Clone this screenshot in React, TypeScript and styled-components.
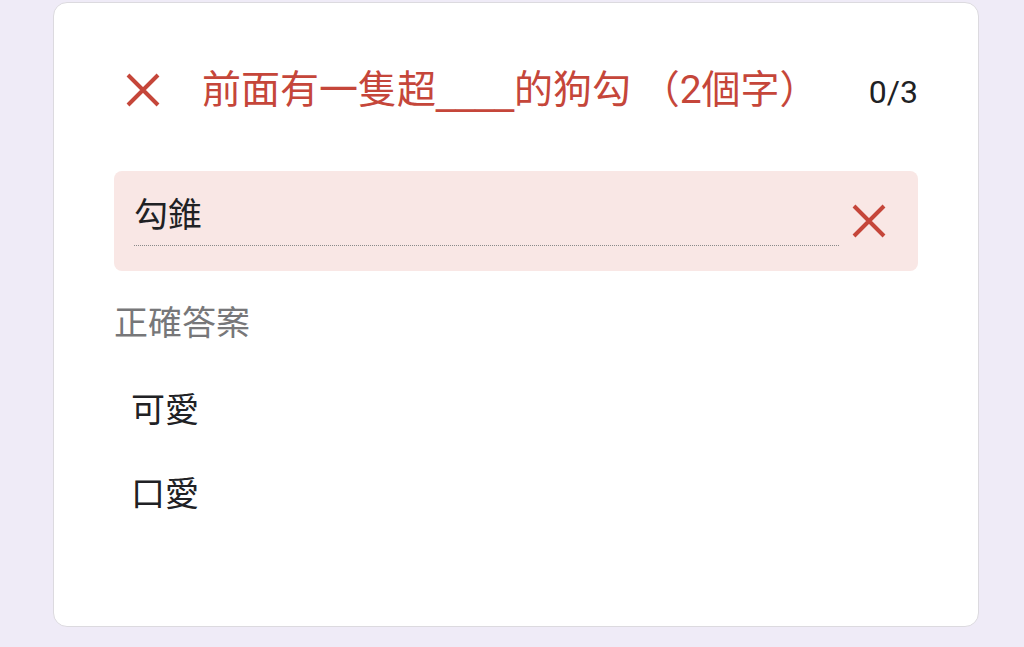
import React from "react";
import styled, { createGlobalStyle } from "styled-components";

const RED = "#c5463a";

const GlobalStyle = createGlobalStyle`
  html, body {
    margin: 0;
    padding: 0;
    background: #efebf7;
  }
  body {
    font-family: Roboto, "Noto Sans CJK TC", sans-serif;
  }
`;

const Card = styled.div`
  box-sizing: border-box;
  margin: 2px 0 0 53px;
  width: 926px;
  height: 625px;
  background: #ffffff;
  border: 1px solid #dcdadf;
  border-radius: 14px;
  padding: 55px 60px 0 60px;
`;

const Header = styled.div`
  display: flex;
  align-items: baseline;
  height: 66px;
`;

const IconSlot = styled.div`
  width: 58px;
  height: 66px;
  display: flex;
  align-items: center;
  justify-content: center;
  align-self: center;
  flex-shrink: 0;
  margin-top: -2px;
`;

const Title = styled.div`
  flex: 1;
  margin-left: 30px;
  font-size: 39px;
  line-height: 64px;
  color: ${RED};
  white-space: nowrap;
`;

/* the blank to fill in: DejaVu's underscore is exactly half an em */
const Blank = styled.span`
  font-family: "DejaVu Sans", sans-serif;
`;

const Counter = styled.div`
  font-size: 32px;
  line-height: 40px;
  color: #202124;
`;

const InputBox = styled.div`
  margin-top: 47px;
  display: flex;
  align-items: center;
  background: #f9e7e5;
  border-radius: 8px;
  padding: 24px 32px 25px 20px;
`;

const Field = styled.div`
  flex: 1;
  font-size: 34px;
  line-height: 40px;
  color: #202124;
  padding-bottom: 10px;
  border-bottom: 1px dotted #8a8a8a;
`;

const ClearIcon = styled.div`
  margin-left: 13px;
  width: 34px;
  height: 34px;
  display: flex;
`;

const Label = styled.div`
  margin-top: 32px;
  font-size: 34px;
  line-height: 40px;
  color: #777779;
`;

const OptionList = styled.div`
  margin-top: 25px;
  display: flex;
  flex-direction: column;
`;

const Option = styled.div`
  padding: 22px 17px;
  font-size: 34px;
  line-height: 40px;
  color: #202124;
`;

const Cross = ({ size = 34 }: { size?: number }) => (
  <svg width={size} height={size} viewBox="0 0 34 34">
    <path
      d="M2 2 L32 32 M32 2 L2 32"
      stroke={RED}
      strokeWidth={4}
      fill="none"
    />
  </svg>
);

const answers = ["可愛", "口愛"];

export default function App() {
  return (
    <>
      <GlobalStyle />
      <Card>
        <Header>
          <IconSlot>
            <Cross />
          </IconSlot>
          <Title>
            前面有一隻超<Blank>____</Blank>的狗勾 （2個字）
          </Title>
          <Counter>0/3</Counter>
        </Header>
        <InputBox>
          <Field>勾錐</Field>
          <ClearIcon>
            <Cross />
          </ClearIcon>
        </InputBox>
        <Label>正確答案</Label>
        <OptionList>
          {answers.map((a) => (
            <Option key={a}>{a}</Option>
          ))}
        </OptionList>
      </Card>
    </>
  );
}
